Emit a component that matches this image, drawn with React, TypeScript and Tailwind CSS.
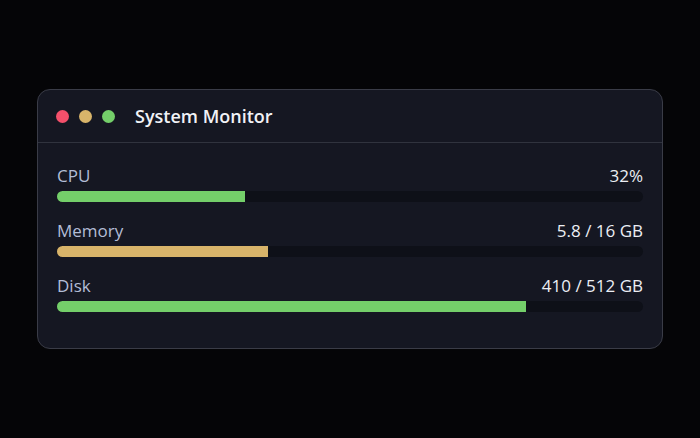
import React from "react";

const stats = [
  { label: "CPU", value: "32%", pct: 32, color: "bg-[#74cf6a]" },
  { label: "Memory", value: "5.8 / 16 GB", pct: 36, color: "bg-[#d8b46a]" },
  { label: "Disk", value: "410 / 512 GB", pct: 80, color: "bg-[#74cf6a]" },
];

const App = () => {
  return (
    <div className="min-h-screen w-full bg-[#050507] flex items-center justify-center font-['Open_Sans',sans-serif]">
      <div className="w-[626px] rounded-[13px] border border-[#3a3c47] bg-[#151722]">
        {/* title bar */}
        <div className="h-[53px] flex items-center px-[18px] border-b border-[#30333e]">
          <div className="flex items-center gap-[10px]">
            <span className="w-[13px] h-[13px] rounded-full bg-[#f4506b]"></span>
            <span className="w-[13px] h-[13px] rounded-full bg-[#d8b46a]"></span>
            <span className="w-[13px] h-[13px] rounded-full bg-[#74cf6a]"></span>
          </div>
          <h1 className="ml-[20px] text-[18px] font-semibold text-[#f1f2f6]">System Monitor</h1>
        </div>

        {/* stats */}
        <div className="px-[19px] pt-[21px] pb-[36px] flex flex-col gap-[17px]">
          {stats.map((s) => (
            <div key={s.label} className="flex flex-col gap-[3px]">
              <div className="flex items-center justify-between text-[17px] leading-6">
                <span className="text-[#b3bdd6]">{s.label}</span>
                <span className="text-[#eceef4]">{s.value}</span>
              </div>
              <div className="h-[11px] rounded-full bg-[#0e1018] overflow-hidden">
                <div className={`h-full ${s.color}`} style={{ width: `${s.pct}%` }}></div>
              </div>
            </div>
          ))}
        </div>
      </div>
    </div>
  );
};

export default App;
